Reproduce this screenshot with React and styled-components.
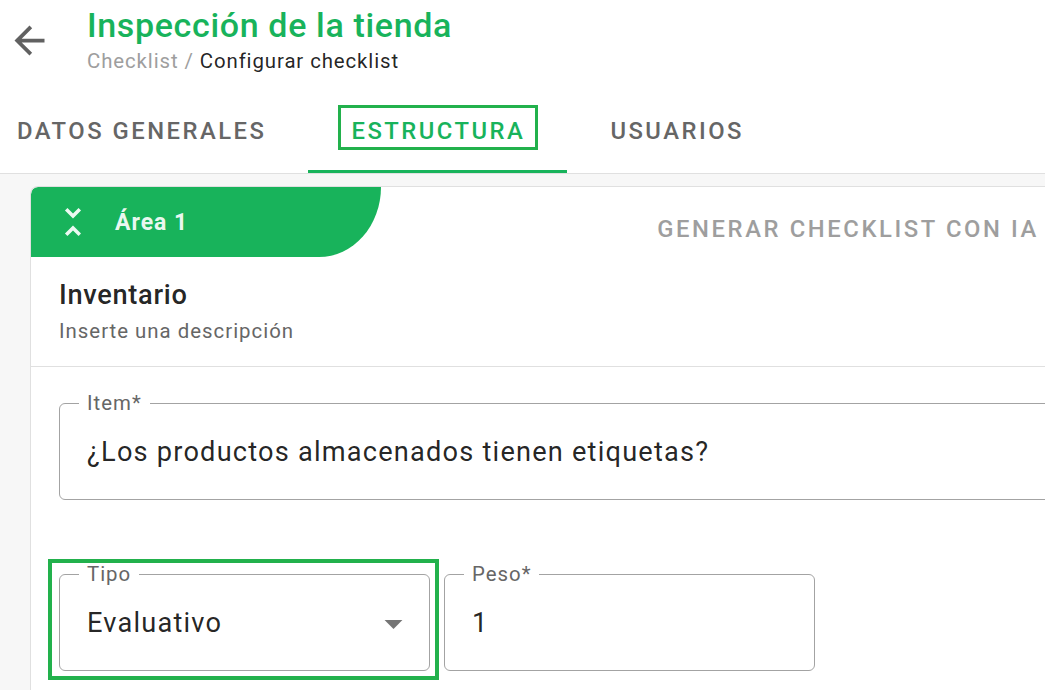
import React from 'react';
import styled, { createGlobalStyle } from 'styled-components';

const GREEN = '#18b35b';
const MARK = '#22b14c';

const GlobalStyle = createGlobalStyle`
  html, body { margin: 0; padding: 0; background: #fff; overflow: hidden; }
  body { font-family: Roboto, "Noto Sans", Arial, sans-serif; }
  * { box-sizing: border-box; }
`;

const Page = styled.div`
  width: 1045px;
  height: 690px;
  overflow: hidden;
  display: flex;
  flex-direction: column;
`;

const Header = styled.header`
  height: 90px;
  flex-shrink: 0;
  display: flex;
  align-items: flex-start;
`;

const BackButton = styled.button`
  border: 0;
  background: none;
  padding: 0;
  margin: 18px 0 0 7px;
  width: 45px;
  height: 45px;
  color: #616161;
  display: flex;
  svg { width: 45px; height: 45px; }
`;

const TitleBlock = styled.div`
  margin-left: 35px;
  display: flex;
  flex-direction: column;
`;

const Title = styled.h1`
  margin: 5px 0 0;
  font-size: 34px;
  line-height: 40px;
  font-weight: 500;
  letter-spacing: 0.65px;
  color: ${GREEN};
`;

const Breadcrumb = styled.div`
  margin-top: 4px;
  font-size: 20.4px;
  line-height: 24px;
  color: rgba(0, 0, 0, 0.87);
  letter-spacing: 0.9px;
`;

const Muted = styled.span`
  color: #9e9e9e;
`;

const TabBar = styled.nav`
  height: 84px;
  flex-shrink: 0;
  display: flex;
  border-bottom: 1px solid #e0e0e0;
`;

const Tab = styled.div`
  height: 100%;
  padding: 29px 42px 0 ${(p) => (p.$first ? '17px' : '43px')};
  font-size: 23.8px;
  line-height: 24px;
  font-weight: 500;
  letter-spacing: 2.5px;
  text-transform: uppercase;
  color: ${(p) => (p.$active ? GREEN : '#666')};
  border-bottom: 3px solid ${(p) => (p.$active ? GREEN : 'transparent')};
`;

const TabLabel = styled.span`
  position: relative;
  display: inline-block;
  &::after {
    content: ${(p) => (p.$marked ? "''" : 'none')};
    position: absolute;
    top: -14px;
    bottom: -7px;
    left: -13px;
    right: -13px;
    border: 3px solid ${MARK};
    pointer-events: none;
  }
`;

const Main = styled.main`
  flex: 1;
  min-height: 0;
  background: #f7f7f7;
  padding: 12px 0 0 30px;
  display: flex;
`;

const Card = styled.section`
  width: 1060px;
  flex-shrink: 0;
  background: #fff;
  border: 1px solid #e0e0e0;
  border-bottom: 0;
  border-radius: 8px 8px 0 0;
  overflow: hidden;
  display: flex;
  flex-direction: column;
`;

const CardHeaderRow = styled.div`
  display: flex;
  align-items: flex-start;
`;

const AreaTab = styled.div`
  width: 350px;
  height: 70px;
  flex-shrink: 0;
  background: ${GREEN};
  border-radius: 7px 0 62px 0 / 7px 0 70px 0;
  display: flex;
  align-items: center;
  padding-left: 21px;
  gap: 21px;
  color: rgba(255, 255, 255, 0.92);
  svg { width: 42px; height: 42px; flex-shrink: 0; }
`;

const AreaTitle = styled.span`
  font-size: 23px;
  font-weight: 700;
  letter-spacing: 1px;
`;

const GenerateButton = styled.button`
  margin: 28px 50px 0 auto;
  padding: 0;
  border: 0;
  background: none;
  font-family: inherit;
  font-size: 23.8px;
  line-height: 28px;
  font-weight: 500;
  letter-spacing: 2.6px;
  text-transform: uppercase;
  color: #9e9e9e;
`;

const SectionInfo = styled.div`
  padding: 22px 28px 23px;
  border-bottom: 1px solid #e0e0e0;
`;

const SectionTitle = styled.h2`
  margin: 0;
  font-size: 27.2px;
  line-height: 32px;
  font-weight: 500;
  letter-spacing: 0.7px;
  color: rgba(0, 0, 0, 0.87);
`;

const SectionDesc = styled.p`
  margin: 8px 0 0;
  font-size: 20.4px;
  line-height: 24px;
  color: #666;
  letter-spacing: 1px;
`;

const Fields = styled.div`
  padding: 26px 28px 0;
  display: flex;
  flex-direction: column;
  gap: 64px;
`;

const FieldRow = styled.div`
  display: flex;
  gap: 14px;
`;

const FieldWrap = styled.div`
  position: relative;
  width: ${(p) => p.$width || 'auto'};
  &::after {
    content: ${(p) => (p.$marked ? "''" : 'none')};
    position: absolute;
    top: -5px;
    bottom: -9px;
    left: -11px;
    right: -9px;
    border: 4px solid ${MARK};
    pointer-events: none;
  }
`;

const Outlined = styled.fieldset`
  margin: 0;
  min-width: 0;
  border: 1px solid #a3a3a3;
  border-radius: 6px;
  padding: 23px ${(p) => (p.$select ? '14px' : '27px')} 31px 27px;
`;

const Legend = styled.legend`
  margin-left: -8px;
  padding: 0 8px;
  font-size: 20.4px;
  line-height: 20px;
  color: #666;
  letter-spacing: 1px;
`;

const FieldContent = styled.div`
  display: flex;
  align-items: center;
  justify-content: space-between;
  height: 32px;
  svg { width: 43px; height: 43px; flex-shrink: 0; color: #757575; }
`;

const FieldValue = styled.span`
  font-size: 27.2px;
  line-height: 32px;
  color: rgba(0, 0, 0, 0.87);
  letter-spacing: 1.2px;
  white-space: nowrap;
`;

const ArrowBack = () => (
  <svg viewBox="0 0 24 24" fill="currentColor" aria-hidden="true">
    <path d="M20 11H7.83l5.59-5.59L12 4l-8 8 8 8 1.41-1.41L7.83 13H20v-2z" />
  </svg>
);

const UnfoldLess = () => (
  <svg viewBox="0 0 24 24" fill="currentColor" aria-hidden="true">
    <path d="M7.41 18.59 8.83 20 12 16.83 15.17 20l1.41-1.41L12 14zm9.18-13.18L15.17 4 12 7.17 8.83 4 7.41 5.41 12 10z" />
  </svg>
);

const ArrowDropDown = () => (
  <svg viewBox="0 0 24 24" fill="currentColor" aria-hidden="true">
    <path d="M7 10l5 5 5-5z" />
  </svg>
);

const tabs = [
  { label: 'Datos generales' },
  { label: 'Estructura', active: true },
  { label: 'Usuarios' },
];

export default function App() {
  return (
    <Page>
      <GlobalStyle />
      <Header>
        <BackButton aria-label="Volver">
          <ArrowBack />
        </BackButton>
        <TitleBlock>
          <Title>Inspección de la tienda</Title>
          <Breadcrumb>
            <Muted>Checklist / </Muted>Configurar checklist
          </Breadcrumb>
        </TitleBlock>
      </Header>

      <TabBar>
        {tabs.map((t, i) => (
          <Tab key={t.label} $first={i === 0} $active={t.active}>
            <TabLabel $marked={t.active}>{t.label}</TabLabel>
          </Tab>
        ))}
      </TabBar>

      <Main>
        <Card>
          <CardHeaderRow>
            <AreaTab>
              <UnfoldLess />
              <AreaTitle>Área 1</AreaTitle>
            </AreaTab>
            <GenerateButton>Generar checklist con IA</GenerateButton>
          </CardHeaderRow>

          <SectionInfo>
            <SectionTitle>Inventario</SectionTitle>
            <SectionDesc>Inserte una descripción</SectionDesc>
          </SectionInfo>

          <Fields>
            <FieldWrap>
              <Outlined>
                <Legend>Item*</Legend>
                <FieldContent>
                  <FieldValue>¿Los productos almacenados tienen etiquetas?</FieldValue>
                </FieldContent>
              </Outlined>
            </FieldWrap>

            <FieldRow>
              <FieldWrap $width="371px" $marked>
                <Outlined $select>
                  <Legend>Tipo</Legend>
                  <FieldContent>
                    <FieldValue>Evaluativo</FieldValue>
                    <ArrowDropDown />
                  </FieldContent>
                </Outlined>
              </FieldWrap>
              <FieldWrap $width="371px">
                <Outlined>
                  <Legend>Peso*</Legend>
                  <FieldContent>
                    <FieldValue>1</FieldValue>
                  </FieldContent>
                </Outlined>
              </FieldWrap>
            </FieldRow>
          </Fields>
        </Card>
      </Main>
    </Page>
  );
}
